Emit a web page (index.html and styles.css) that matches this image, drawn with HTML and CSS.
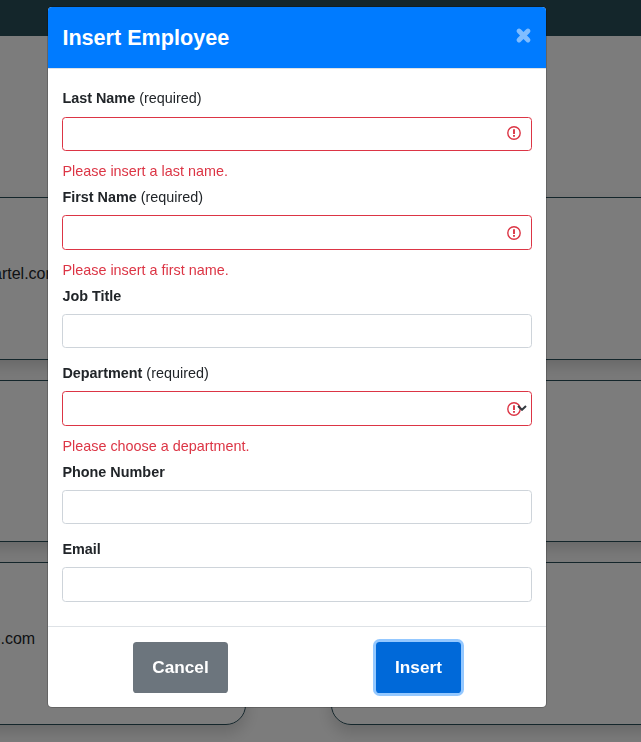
FILE: index.html
```html
<!DOCTYPE html>
<html lang="en">
<head>
<meta charset="utf-8">
<title>Insert Employee</title>
<link rel="stylesheet" href="styles.css">
</head>
<body>
<div class="page">
  <header class="topbar"></header>
  <main class="directory">
    <article class="card"><p class="address first">artel.com</p></article>
    <article class="card"></article>
    <article class="card"></article>
    <article class="card"></article>
    <article class="card"><p class="address last"><span class="link">e</span>.com</p></article>
    <article class="card"></article>
  </main>
</div>
<div class="backdrop">
  <section class="modal" role="dialog" aria-labelledby="modal-title">
    <header class="modal-header">
      <h1 id="modal-title">Insert Employee</h1>
      <button class="close" type="button" aria-label="Close">
        <svg viewBox="0 0 16 16"><path d="M3.8 3.8 12.2 12.2M12.2 3.8 3.8 12.2"/></svg>
      </button>
    </header>
    <form class="modal-body">
      <div class="field invalid last-name">
        <label for="last"><b>Last Name</b> (required)</label>
        <div class="control"><input id="last" type="text">
          <svg class="alert" viewBox="0 0 14 14"><circle cx="7" cy="7" r="6.2"/><path d="M7 3.2v4.7M7 9.1v1.7"/></svg></div>
        <p class="error">Please insert a last name.</p>
      </div>
      <div class="field invalid">
        <label for="first"><b>First Name</b> (required)</label>
        <div class="control"><input id="first" type="text">
          <svg class="alert" viewBox="0 0 14 14"><circle cx="7" cy="7" r="6.2"/><path d="M7 3.2v4.7M7 9.1v1.7"/></svg></div>
        <p class="error">Please insert a first name.</p>
      </div>
      <div class="field">
        <label for="job"><b>Job Title</b></label>
        <div class="control"><input id="job" type="text"></div>
      </div>
      <div class="field invalid">
        <label for="department"><b>Department</b> (required)</label>
        <div class="control"><select id="department"></select>
          <svg class="alert" viewBox="0 0 14 14"><circle cx="7" cy="7" r="6.2"/><path d="M7 3.2v4.7M7 9.1v1.7"/></svg>
          <svg class="chevron" viewBox="0 0 10 6"><path d="M1 1l4 3.8L9 1"/></svg></div>
        <p class="error">Please choose a department.</p>
      </div>
      <div class="field">
        <label for="phone"><b>Phone Number</b></label>
        <div class="control"><input id="phone" type="text"></div>
      </div>
      <div class="field">
        <label for="email"><b>Email</b></label>
        <div class="control"><input id="email" type="text"></div>
      </div>
    </form>
    <footer class="modal-footer">
      <button class="btn cancel" type="button">Cancel</button>
      <button class="btn insert" type="button">Insert</button>
    </footer>
  </section>
</div>
</body>
</html>
```

FILE: styles.css
```css
* { box-sizing: border-box; }
html, body { height: 100%; }
body {
  margin: 0;
  overflow: hidden;
  font-family: "Liberation Sans", Arial, sans-serif;
  color: #212529;
}
h1, p { margin: 0; }
.page { height: 742px; overflow: hidden; background: #f9f9f9; }
.topbar { height: 36px; background: #294c57; }
.directory {
  display: grid;
  grid-template-columns: 346px 410px;
  grid-auto-rows: 162.5px;
  gap: 20.2px 85px;
  margin: 161px 0 0 -100px;
}
.card {
  border: 1px solid #294c57;
  border-radius: 20px;
  box-shadow: 0 8px 16px rgba(0, 0, 0, .16);
}
.address { font-size: 16px; line-height: 24px; white-space: nowrap; }
.first { padding: 64px 0 0 92px; }
.last { padding: 64px 0 0 90.6px; }
.link { color: #3f91a7; }
.backdrop {
  position: fixed;
  inset: 0;
  padding: 7px 0 0 48px;
  background: rgba(0, 0, 0, .5);
}
.modal {
  width: 498px;
  height: 700px;
  border-radius: 4px;
  background: #fff;
  box-shadow: 0 0 0 1px rgba(0, 0, 0, .2);
  overflow: hidden;
}
.modal-header {
  display: flex;
  justify-content: space-between;
  height: 62px;
  padding: 17px 14px 0 14.4px;
  border-bottom: 1px solid #dee2e6;
  background: #007bff;
  background-clip: padding-box;
  color: #fff;
}
.modal-header h1 { font-size: 21.6px; line-height: 27px; }
.close {
  width: 17px;
  height: 17px;
  margin-top: 3px;
  padding: 0;
  border: 0;
  background: none;
}
.close svg { display: block; width: 17px; height: 17px; }
.close path { fill: none; stroke: #80bdff; stroke-width: 4.6; stroke-linecap: round; }
.modal-body { height: 557px; padding: 18px 14px 0; }
.field { height: 77.3px; font-size: 14.4px; }
.field.invalid { height: 98.6px; }
.field.last-name { height: 98.4px; }
.field label { display: block; height: 30px; padding-left: .4px; line-height: 24px; }
.field.last-name label { line-height: 22.6px; }
.control { position: relative; height: 34.4px; }
.control input, .control select {
  display: block;
  width: 100%;
  height: 100%;
  margin: 0;
  border: 1px solid #ced4da;
  border-radius: 3.6px;
  background: #fff;
  appearance: none;
}
.invalid input, .invalid select { border-color: #dc3545; }
.alert { position: absolute; right: 11px; top: 9px; width: 14px; height: 14px; }
#first + .alert, #department + .alert { top: 10.4px; }
.alert circle { fill: none; stroke: #dc3545; stroke-width: 1.4; }
.alert path { fill: none; stroke: #dc3545; stroke-width: 1.9; }
.chevron { position: absolute; right: 5px; top: 14px; width: 10px; height: 6px; }
.chevron path { fill: none; stroke: #343a40; stroke-width: 2; }
.error { padding: 9px 0 0 .4px; line-height: 22px; color: #dc3545; }
.modal-footer {
  display: flex;
  justify-content: space-between;
  height: 81px;
  padding: 15px 85px;
  border-top: 1px solid #dee2e6;
}
.btn {
  height: 51px;
  padding: 0;
  border: 0;
  border-radius: 3.6px;
  font: bold 17.2px "Liberation Sans", Arial, sans-serif;
  color: #fff;
}
.cancel { width: 95px; background: #6c757d; }
.insert { width: 85px; background: #0069d9; box-shadow: 0 0 0 3px #94c8ff; }
```
